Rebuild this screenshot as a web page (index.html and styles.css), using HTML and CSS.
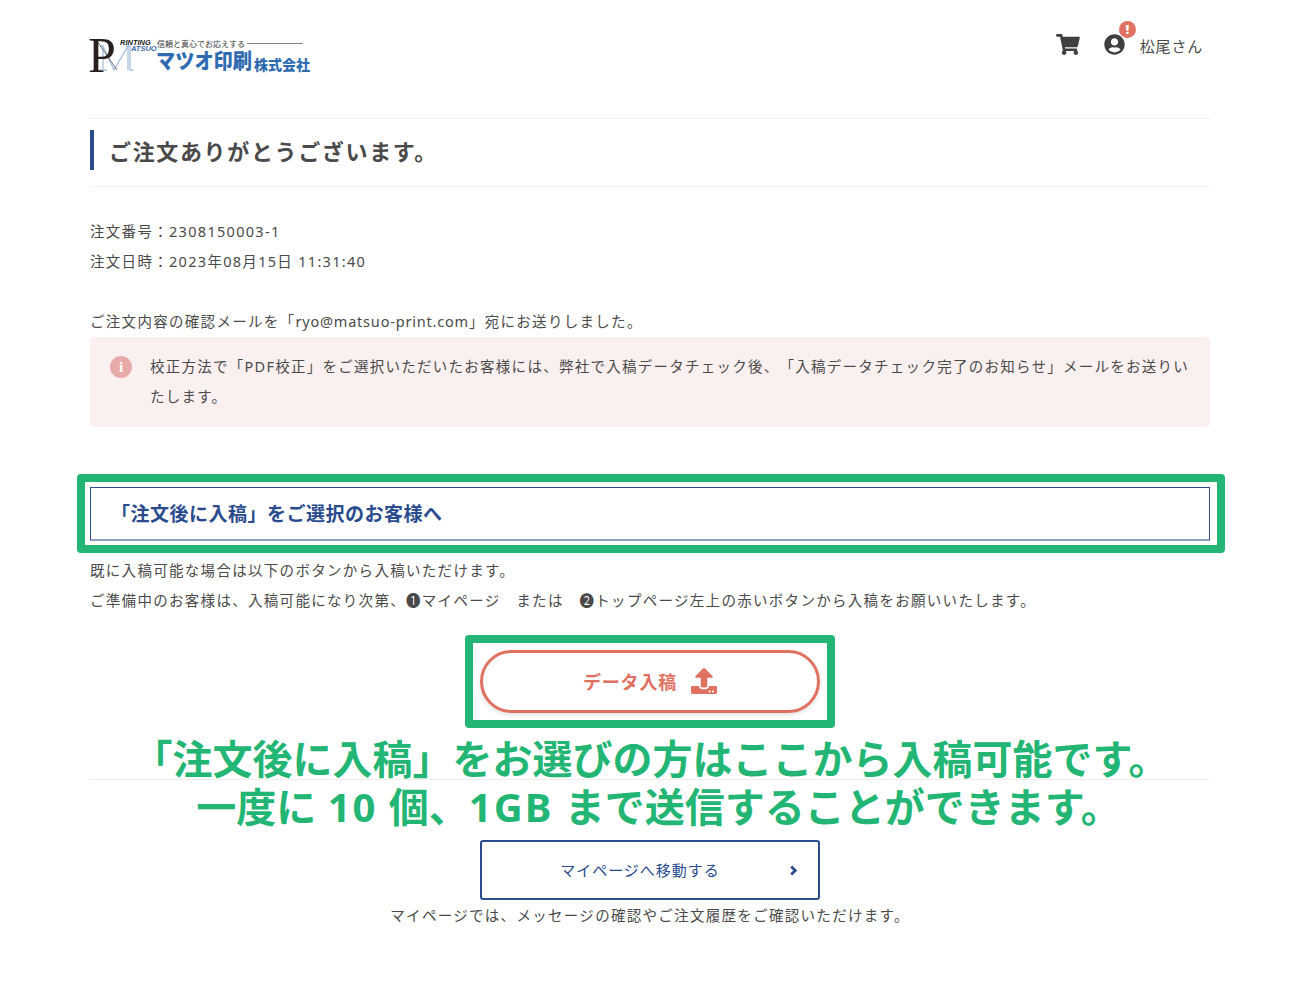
FILE: index.html
```html
<!DOCTYPE html>
<html lang="ja">
<head>
<meta charset="utf-8">
<title>ご注文ありがとうございます</title>
<link rel="stylesheet" href="styles.css">
</head>
<body>
<div class="page">
  <header class="site-header">
    <div class="logo">
      <svg class="logo-svg" width="222" height="56" viewBox="0 0 222 56">
        <path d="M10 20h3v24M10 44h7M13 20l11 24 14-24v24M36 20h4v24h3" fill="none" stroke="#a9bfdc" stroke-width="1.300"/>
        <path d="M7 15l20 29" fill="none" stroke="#555" stroke-width=".8"/>
        <text x="-2" y="46" class="l-p">P</text>
        <text x="30" y="19" class="l-en">RINTING</text>
        <text x="41" y="25" class="l-en l-blue">ATSUO</text>
        <text x="67" y="21" class="l-sub">信頼と真心でお応えする</text>
        <path d="M157 17.500h56" stroke="#555" stroke-width=".7"/>
        <text x="66" y="42" class="l-name" textLength="96" lengthAdjust="spacingAndGlyphs">マツオ印刷</text>
        <text x="164" y="44" class="l-co">株式会社</text>
      </svg>
    </div>
    <nav class="user-nav">
      <svg class="cart" viewBox="0 0 576 512" width="24" height="21"><path fill="#3f3f3f" d="M528.12 301.319l47.273-208C578.806 78.301 567.391 64 551.99 64H159.208l-9.166-44.81C147.758 8.021 137.93 0 126.529 0H24C10.745 0 0 10.745 0 24v16c0 13.255 10.745 24 24 24h69.883l70.248 343.435C147.325 417.1 136 435.222 136 456c0 30.928 25.072 56 56 56s56-25.072 56-56c0-15.674-6.447-29.835-16.824-40h209.647C430.447 426.165 424 440.326 424 456c0 30.928 25.072 56 56 56s56-25.072 56-56c0-22.172-12.888-41.332-31.579-50.405l5.517-24.276c3.413-15.018-8.002-29.319-23.403-29.319H218.117l-6.545-32h293.145c11.206 0 20.92-7.754 23.403-18.681z"/></svg>
      <span class="user-icon">
        <svg viewBox="0 0 496 512" width="21" height="21"><path fill="#3f3f3f" d="M248 8C111 8 0 119 0 256s111 248 248 248 248-111 248-248S385 8 248 8zm0 96c48.600 0 88 39.400 88 88s-39.400 88-88 88-88-39.400-88-88 39.400-88 88-88zm0 344c-58.700 0-111.300-26.600-146.500-68.200 18.800-35.400 55.600-59.800 98.500-59.800 2.400 0 4.800.4 7.100 1.100 13 4.200 26.600 6.900 40.900 6.900 14.300 0 28-2.700 40.900-6.900 2.300-.7 4.700-1.100 7.100-1.100 42.900 0 79.700 24.400 98.500 59.800C359.300 421.400 306.700 448 248 448z"/></svg>
        <span class="badge">!</span>
      </span>
      <span class="user-name">松尾さん</span>
    </nav>
  </header>

  <main class="content">
    <h1 class="page-title"><span class="page-title-text">ご注文ありがとうございます。</span></h1>

    <p class="line first-line">注文番号：2308150003-1</p>
    <p class="line">注文日時：2023年08月15日 11:31:40</p>
    <p class="line mail-line">ご注文内容の確認メールを「<span class="email">ryo@matsuo-print.com</span>」宛にお送りしました。</p>

    <div class="alert">
      <span class="alert-icon">i</span>
      <p class="alert-text">校正方法で「PDF校正」をご選択いただいたお客様には、弊社で入稿データチェック後、「入稿データチェック完了のお知らせ」メールをお送りいたします。</p>
    </div>

    <h2 class="section-title">「注文後に入稿」をご選択のお客様へ</h2>
    <p class="line">既に入稿可能な場合は以下のボタンから入稿いただけます。</p>
    <p class="line">ご準備中のお客様は、入稿可能になり次第、❶マイページ　または　❷トップページ左上の赤いボタンから入稿をお願いいたします。</p>

    <div class="center upload-row">
      <a class="upload-btn">データ入稿
        <svg viewBox="0 0 512 512" width="26" height="26"><path fill="#e0705f" d="M296 384h-80c-13.300 0-24-10.700-24-24V192h-87.700c-17.800 0-26.700-21.500-14.100-34.100L242.300 5.700c7.500-7.500 19.800-7.500 27.300 0l152.200 152.200c12.600 12.600 3.700 34.100-14.100 34.100H320v168c0 13.300-10.700 24-24 24zm216-8v112c0 13.300-10.700 24-24 24H24c-13.300 0-24-10.700-24-24V376c0-13.300 10.700-24 24-24h136v8c0 30.900 25.100 56 56 56h80c30.900 0 56-25.100 56-56v-8h136c13.300 0 24 10.700 24 24zm-124 88c0-11-9-20-20-20s-20 9-20 20 9 20 20 20 20-9 20-20zm64 0c0-11-9-20-20-20s-20 9-20 20 9 20 20 20 20-9 20-20z"/></svg>
      </a>
    </div>

    <hr class="divider">

    <div class="center">
      <a class="mypage-btn">マイページへ移動する
        <svg class="chev" viewBox="0 0 10 12" width="9" height="11"><path d="M2.500 1.500L7 6l-4.500 4.500" fill="none" stroke="#2a4b8d" stroke-width="3"/></svg>
      </a>
    </div>
    <p class="line center-text">マイページでは、メッセージの確認やご注文履歴をご確認いただけます。</p>
  </main>
</div>

<div class="mark mark-title"></div>
<div class="mark mark-button"></div>
<div class="annotation">「注文後に入稿」をお選びの方はここから入稿可能です。<br><span class="annotation-sub">一度に <span class="annotation-num">10</span> 個、<span class="annotation-num">1GB</span> まで送信することができます。</span></div>
</body>
</html>
```
FILE: styles.css
```css
* { box-sizing: border-box; }
html, body { margin: 0; padding: 0; background: #fff; }
body {
  font-family: "Noto Sans", "Noto Sans CJK JP", sans-serif;
  color: #4a4a4a;
  font-size: 15px;
  position: relative;
  min-height: 981px;
  text-spacing-trim: space-all;
}
.page { width: 1120px; margin: 0 auto 0 90px; }
.site-header {
  height: 119px;
  border-bottom: 1px solid #f0f0f0;
  display: flex;
  justify-content: space-between;
  align-items: flex-start;
}
.logo { padding-top: 26px; }
.logo-svg { display: block; overflow: visible; }
.l-p { font-family: "Liberation Serif", serif; font-size: 50px; fill: #2a1f1f; }
.l-en { font-family: "Liberation Sans", sans-serif; font-size: 7.500px; font-weight: 700; font-style: italic; fill: #222; }
.l-blue { fill: #3a6aa8; }
.l-sub { font-size: 8px; fill: #333; }
.l-name { font-size: 21px; font-weight: 900; fill: #2f6bb0; }
.l-co { font-size: 14px; font-weight: 900; fill: #2f6bb0; }
.user-nav {
  display: flex;
  align-items: center;
  padding: 34px 7px 0 0;
}
.cart { margin-right: 24px; }
.user-icon { position: relative; display: block; height: 21px; margin-right: 15px; }
.user-icon svg { display: block; }
.badge {
  position: absolute;
  left: 15px;
  top: -13px;
  width: 17px;
  height: 17px;
  border-radius: 50%;
  background: #e0705f;
  color: #fff;
  font-size: 13px;
  font-weight: 900;
  line-height: 17px;
  text-align: center;
}
.user-name { font-size: 15px; letter-spacing: .8px; position: relative; top: 1px; }
.page-title {
  margin: 0;
  height: 68px;
  border-bottom: 1px solid #f0f0f0;
  padding-top: 11px;
}
.page-title-text {
  display: block;
  height: 40px;
  line-height: 42px;
  border-left: 4px solid #2a4b8d;
  padding-left: 15px;
  font-size: 22px;
  font-weight: 700;
  letter-spacing: 1.650px;
  color: #4a4a4a;
}
.line {
  margin: 0;
  line-height: 30px;
  font-size: 14.500px;
  letter-spacing: 1.300px;
  white-space: nowrap;
}
.email { letter-spacing: .8px; }
.first-line { margin-top: 29px; }
.mail-line { margin-top: 30px; }
.alert {
  height: 90px;
  margin-top: 1px;
  background: #fbf0f0;
  border-radius: 4px;
  padding: 14px 10px 14px 20px;
  display: flex;
  gap: 18px;
}
.alert-icon {
  flex: none;
  width: 22px;
  height: 22px;
  margin-top: 5px;
  border-radius: 50%;
  background: #e8a9a9;
  color: #fff;
  font-family: "Liberation Serif", serif;
  font-weight: 700;
  font-size: 15px;
  line-height: 22px;
  text-align: center;
}
.alert-text {
  margin: 0;
  line-height: 30px;
  font-size: 14.500px;
  letter-spacing: 1.260px;
}
.section-title {
  margin: 60px 0 14px;
  height: 54px;
  line-height: 52px;
  border: 1px solid #2a4b8d;
  border-bottom-color: #8c9fc4;
  border-bottom-width: 2px;
  padding-left: 20px;
  font-size: 19px;
  font-weight: 700;
  letter-spacing: .5px;
  color: #2a4b8d;
}
.center { display: flex; justify-content: center; }
.upload-row { margin-top: 35px; }
.upload-btn {
  width: 340px;
  height: 63px;
  border: 3px solid #e0705f;
  border-radius: 32px;
  box-shadow: 0 2px 4px rgba(0,0,0,.12);
  color: #e0705f;
  font-size: 18px;
  font-weight: 700;
  letter-spacing: .8px;
  display: flex;
  align-items: center;
  justify-content: center;
  gap: 14px;
  padding-bottom: 2px;
}
.divider {
  margin: 66px 0 60px;
  border: 0;
  border-top: 1px solid #eee;
}
.mypage-btn {
  position: relative;
  width: 340px;
  height: 60px;
  border: 2px solid #2a4b8d;
  border-radius: 3px;
  color: #2a4b8d;
  font-size: 15px;
  letter-spacing: 1px;
  display: flex;
  align-items: center;
  justify-content: center;
  padding: 0 20px 2px 0;
}
.chev { position: absolute; right: 20px; top: 23px; }
.center-text { text-align: center; line-height: 30px; }
.mark {
  position: absolute;
  border: 8px solid #22b573;
  border-radius: 4px;
  pointer-events: none;
}
.mark-title { left: 77px; top: 474px; width: 1148px; height: 79px; }
.mark-button { left: 465px; top: 635px; width: 370px; height: 93px; }
.annotation {
  position: absolute;
  left: 0;
  top: 735px;
  width: 1301px;
  text-align: center;
  color: #22b573;
  font-size: 40px;
  font-weight: 700;
  line-height: 48px;
  white-space: nowrap;
}
.annotation-sub { display: inline-block; margin-left: 16px; word-spacing: 1px; }
.annotation-num { letter-spacing: 2px; }
```
